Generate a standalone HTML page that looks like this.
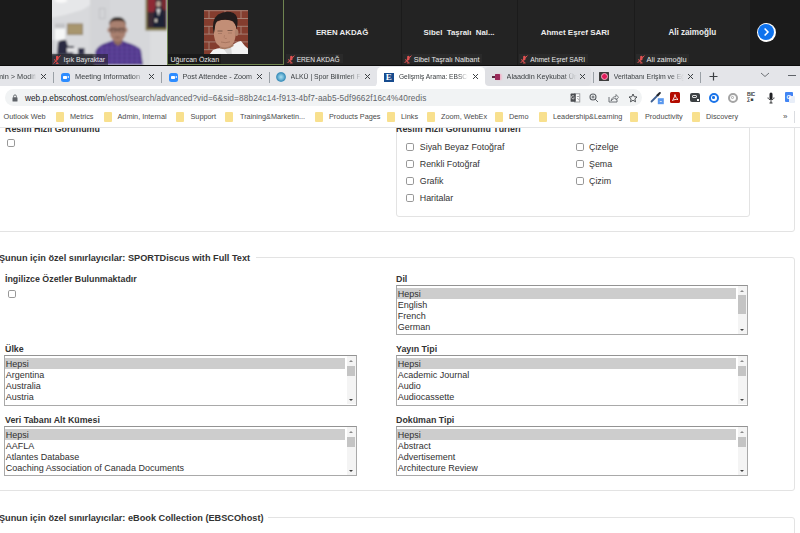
<!DOCTYPE html>
<html><head><meta charset="utf-8">
<style>
*{box-sizing:border-box}
html,body{margin:0;padding:0}
body{width:800px;height:533px;overflow:hidden;position:relative;background:#fff;font-family:"Liberation Sans",sans-serif}
.a{position:absolute}
#zs{left:0;top:0;width:800px;height:65.5px;background:#1b1b1b;overflow:hidden}
.tile{position:absolute;top:0;height:65px;background:#232323}
.big{position:absolute;color:#ececec;font-weight:bold;white-space:nowrap}
.lbl{position:absolute;bottom:2px;left:2px;height:9px;background:#1b1b1b;color:#e8e8e8;font-size:6.6px;line-height:9px;white-space:nowrap;padding:0 2px 0 10px}
.mic{position:absolute;left:2px;top:1px;width:6px;height:7px}
#tabs{left:0;top:65.5px;width:800px;height:20.5px;background:#e4e5e9;overflow:hidden}
.tab{position:absolute;top:0;height:21px;font-size:7.3px;color:#3c4043;white-space:nowrap}
.tt{position:absolute;top:6.5px;line-height:9px;overflow:hidden}
.tx{position:absolute;top:5px;font-size:10px;line-height:11px;color:#3c4043}
.sep{position:absolute;top:6px;width:1px;height:11px;background:#9aa0a6}
#tool{left:0;top:86px;width:800px;height:22px;background:#fff}
#omni{left:5px;top:2.5px;width:637px;height:17.5px;border-radius:9px;background:#f1f3f4}
#bm{left:0;top:108px;width:800px;height:20px;background:#fff;border-bottom:1px solid #e2e3e5;font-size:7.3px;color:#4a4a4a}
.bk{position:absolute;top:4px;line-height:9px;white-space:nowrap}
.fold{position:absolute;top:4px;width:8px;height:9.5px;background:#f8e08e;border-radius:1px;margin-left:-0.7px}
#page{left:0;top:128px;width:800px;height:405px;background:#fff;overflow:hidden;color:#333;font-size:8.8px}
.h{position:absolute;font-weight:bold;white-space:nowrap;color:#333}
.cb{position:absolute;width:8px;height:8px;border:1px solid #989898;border-radius:1.8px;background:#fff}
.ct{position:absolute;white-space:nowrap;color:#333;line-height:10px}
.sel{position:absolute;width:352px;height:50px;border:1px solid #a9a9a9;border-top-color:#939393;background:#fff;overflow:hidden}
.opt{position:absolute;left:0;height:11.2px;line-height:12.6px;padding-left:0.8px;white-space:nowrap;color:#303030;width:339px;font-size:9px}
.opt.s{background:#cdcdcd}
.sb{position:absolute;right:0;top:0;width:9px;height:48px;background:#f4f4f4}
.thumb{position:absolute;left:0.8px;width:7.4px;top:9.5px;height:10px;background:#c4c4c4}
.fs{position:absolute;border:1px solid #e3e3e3;border-radius:3px}

.zi{position:absolute;top:7px;width:9.5px;height:9px;border-radius:2.5px;background:#2d8cff}
.zi:after{content:"";position:absolute;left:2px;top:3px;width:4px;height:3px;background:#fff;border-radius:0.7px}
.zi:before{content:"";position:absolute;left:6px;top:3px;width:0;height:0;border-top:1.5px solid transparent;border-bottom:1.5px solid transparent;border-right:2px solid #fff}
.ai{position:absolute;top:6px;width:10px;height:10px;border-radius:50%;background:radial-gradient(circle,#a8dcef 0%,#6fb8d8 35%,#3f8fba 60%,#7cbad6 80%,#c9e1ec 100%)}
.ei{position:absolute;top:7px;width:9.5px;height:9.5px;background:#174b8e;color:#fff;font-family:"Liberation Serif",serif;font-weight:bold;font-size:9px;line-height:9.5px;text-align:center}
.ki{position:absolute;top:7px;width:9px;height:9px}
.ki:before{content:"";position:absolute;left:0;top:3.8px;width:3px;height:1.4px;background:#5a2a40}
.ki:after{content:"";position:absolute;left:2.5px;top:1.5px;width:5px;height:6px;background:#9a2a5a;box-shadow:1.5px 0 1.5px #f4b0c8;border-radius:0.5px}
.vi{position:absolute;top:6px;width:10px;height:9.5px;background:#3c3c3c;border-radius:0.5px}
.vi:after{content:"";position:absolute;left:1.5px;top:1.3px;width:7px;height:7px;box-sizing:border-box;border-radius:50%;background:#e01a5a;border:1px solid #f5b0c4}
.act{position:absolute;top:1.3px;height:19.5px;background:#fff;border-radius:4.5px 4.5px 0 0}
.hov{position:absolute;top:1.3px;height:19.2px;background:#dfe0e4;border-radius:4px}
.fade{-webkit-mask-image:linear-gradient(to right,#000 80%,transparent 100%)}
.fade2{-webkit-mask-image:linear-gradient(to right,#000 86%,transparent 100%)}
.fade4{-webkit-mask-image:linear-gradient(to right,#000 90%,transparent 100%)}
.fade3{-webkit-mask-image:linear-gradient(to right,#000 80%,transparent 100%)}

.url{font-size:8.25px;line-height:12px;color:#5f6368;white-space:nowrap}

.t{position:absolute;white-space:nowrap}
.lg{position:absolute;background:#fff}
.up,.dn{position:absolute;left:2.2px;width:0;height:0;border-left:2.3px solid transparent;border-right:2.3px solid transparent}
.up{top:3.5px;border-bottom:2.5px solid #8a8a8a}
.dn{bottom:3.5px;border-top:2.5px solid #404040}

.nm{position:absolute;color:#e6e6e6;font-size:6.8px;line-height:10px;white-space:nowrap}
</style></head><body>

<!-- ZOOM STRIP -->
<div id="zs" class="a">
  <svg class="a" style="left:52px;top:0" width="115" height="65" viewBox="0 0 115 65">
    <defs><filter id="bl" x="-10%" y="-10%" width="120%" height="120%"><feGaussianBlur stdDeviation="0.9"/></filter></defs>
    <g filter="url(#bl)">
    <rect x="-2" y="-2" width="119" height="69" fill="#d8d9dc"/>
    <path d="M-2 -2 H50 L30 10 Q15 15 -2 18Z" fill="#e6e7e9"/>
    <rect x="38" y="-2" width="20" height="69" fill="#d3d4d7"/>
    <rect x="58" y="-2" width="40" height="69" fill="#d6d7da"/>
    <rect x="98" y="-2" width="19" height="69" fill="#dcdddf"/>
    <ellipse cx="9" cy="0.5" rx="6.5" ry="2.2" fill="#fafafa"/>
    <rect x="3" y="23.5" width="10" height="5" fill="#c2c3c6"/>
    <rect x="3" y="28.5" width="10" height="11.5" fill="#f6f7f7"/>
    <rect x="15" y="23.5" width="16" height="11.5" fill="#8c7a5c"/>
    <rect x="16" y="24.5" width="14" height="9.5" fill="#a8966e"/>
    <rect x="47.5" y="8.5" width="5.5" height="10" fill="none" stroke="#bdbec2" stroke-width="0.9"/>
    <rect x="-2" y="40" width="4" height="14" fill="#c8c8cc"/>
    <path d="M5 54 L6 42 Q10 39 14 40 L16 46 L22 46 L21 54Z" fill="#2b2a42"/>
    <rect x="15" y="48" width="12" height="4.5" fill="#e2e2e4"/>
    <rect x="26" y="48" width="6.5" height="7" fill="#2e2e48"/>
    <rect x="-2" y="54" width="44" height="13" fill="#4e4f5e"/>
    <rect x="93.5" y="-2" width="21.5" height="32.5" fill="#7d7240"/>
    <rect x="95.5" y="-2" width="19.5" height="30" fill="#3a2a36"/>
    <rect x="95.5" y="-2" width="8" height="14" fill="#8e2c34"/>
    <rect x="110" y="-2" width="5" height="12" fill="#7a2a30"/>
    <path d="M101 28 L102 12 Q104 5 108 6 Q112 8 112 14 L113 28Z" fill="#1d2236"/>
    <ellipse cx="106.5" cy="4" rx="2.2" ry="3" fill="#c0a898"/>
    <path d="M104.5 9 L106.5 16 L108.5 9Z" fill="#dcdcdc"/>
    <rect x="103" y="19" width="2" height="3" fill="#d8d0c8"/>
    <path d="M42 65 L43.5 51 Q46 45 55 42.5 L62 40 L69 40 L75 42.5 Q85 45 89 50 L91 65Z" fill="#4f3488"/>
    <g stroke="#8c70c8" stroke-width="0.7" opacity="0.55"><path d="M46 48H88M45 52H89M44 56H90M44 60H90M44 64H90M50 44V65M55 43V65M60 41V65M65 41V65M70 41V65M75 43V65M80 44V65M85 47V65"/></g>
    <path d="M61 37 L71 37 L70 43 L66 46 L62 43Z" fill="#8e6a5c"/>
    <path d="M57.5 26 Q57 18 65.5 18 Q74 18 74 26 L73.5 35 Q71 41.5 65.5 41.5 Q60 41.5 58 35Z" fill="#a98070"/>
    <path d="M57.3 25 Q57.3 17 65.5 17 Q73.7 17 73.8 25 L72.5 21.5 Q66 19.5 59 21.5Z" fill="#2a201c"/>
    <path d="M58.3 29H64.2M66.8 29H72.8M64.2 29.4H66.8" stroke="#2a2020" stroke-width="0.7"/>
    <rect x="58.3" y="28.8" width="5.8" height="3" fill="none" stroke="#2e2626" stroke-width="0.5"/>
    <rect x="66.8" y="28.8" width="5.8" height="3" fill="none" stroke="#2e2626" stroke-width="0.5"/>
    <ellipse cx="65.5" cy="37.5" rx="3.2" ry="0.9" fill="#8e6858"/>
    <ellipse cx="56.8" cy="30" rx="1.3" ry="2.6" fill="#a88070"/>
    <ellipse cx="74.2" cy="30" rx="1.3" ry="2.6" fill="#a88070"/>
    </g>
  </svg>
  <div class="a" style="left:52px;top:53.5px;width:55.5px;height:11px;background:rgba(25,25,28,0.5)"></div>
  <svg class="a mic2" style="left:53px;top:55px" width="8" height="9" viewBox="0 0 8 9"><path d="M3 1.2 Q4.5 0.2 5.5 1.5 L5.5 4 Q5 6 3 5.5Z" fill="#e04848"/><path d="M1.5 4 Q2 7 4.2 7 L4.2 8.5M2.8 8.5H5.6" stroke="#e04848" stroke-width="0.9" fill="none"/><path d="M0.5 8.5 L7.5 0.5" stroke="#e04848" stroke-width="1"/></svg>
  <div class="nm" style="left:63.5px;top:55px">Işık Bayraktar</div>
  <div class="a" style="left:167px;top:0;width:117px;height:64.6px;border:1px solid #6f8450;border-top:none;background:#232323"></div>
  <svg class="a" style="left:203.7px;top:9.6px" width="44.5" height="44.5" viewBox="0 0 44.5 44.5">
    <defs><filter id="bl2" x="-5%" y="-5%" width="110%" height="110%"><feGaussianBlur stdDeviation="0.6"/></filter>
    <clipPath id="cp2"><rect width="44.5" height="44.5"/></clipPath></defs>
    <g clip-path="url(#cp2)"><g filter="url(#bl2)">
    <rect x="-2" y="-2" width="49" height="49" fill="#843c2e"/>
    <g stroke="#b29a8e" stroke-width="0.8" opacity="0.9">
      <path d="M-2 0.7H47M-2 8.5H47M-2 16.3H47M-2 24.1H47M-2 31.9H47M-2 39.7H47"/>
      <path d="M5 0.7V8.5M21 0.7V8.5M37 0.7V8.5M13 8.5V16.3M29 8.5V16.3M45 8.5V16.3M5 16.3V24.1M21 16.3V24.1M37 16.3V24.1M13 24.1V31.9M29 24.1V31.9M45 24.1V31.9M5 31.9V39.7M21 31.9V39.7M37 31.9V39.7M13 39.7V47M29 39.7V47"/>
    </g>
    <path d="M5 45 L9 40 Q14 37.5 19 38 L27 36 Q33 31.5 37 31 L41 36 L44.5 39 L44.5 45Z" fill="#f2f2f2"/>
    <path d="M19 38 L24 45 L28 45 L27 36Z" fill="#d8d8d8"/>
    <path d="M13.5 30 L29 30 L29.5 36 Q23 41 16 38.5Z" fill="#a87a64"/>
    <path d="M9.8 16 Q9 28 12.5 33.5 Q16 37.5 21 37.5 Q27 37 30 32 Q32.5 26 32 17 Q30 9 21 9.5 Q12 10 9.8 16Z" fill="#c28e76"/>
    <path d="M9.8 24 Q6.8 10 14 4.5 Q22 0 29.5 3 Q34.5 6 33.5 14 L32.5 19 Q31.5 12 27 10.5 Q20 9 13.5 11 Q11 13 10.8 19Z" fill="#241c1a"/>
    <ellipse cx="32.6" cy="22.5" rx="1.8" ry="3.6" fill="#b0826c"/>
    <path d="M13.5 21H18.5M23.5 20.5H28.5" stroke="#5a3e34" stroke-width="0.9" opacity="0.75"/>
    <path d="M14 23.5H18M24 23H28" stroke="#7a5446" stroke-width="0.6" opacity="0.6"/>
    <path d="M20.5 25 Q19.5 28 21 28.5 Q22.5 28.8 23 28" stroke="#9a6a56" stroke-width="0.6" fill="none" opacity="0.7"/>
    <path d="M17 32 Q21 33.5 26 31.8" stroke="#8a5a48" stroke-width="0.7" fill="none" opacity="0.7"/>
    </g></g>
  </svg>
  <div class="a" style="left:167.5px;top:54px;width:53px;height:10px;background:rgba(22,22,22,0.7)"></div>
  <div class="nm" style="left:170.5px;top:55px;font-size:7px">Uğurcan Özkan</div>
  <div class="tile" style="left:284.0px;width:116.5px"></div>
<div class="big" style="left:315.9px;top:27.90px;font-size:7.85px;line-height:10px">EREN AKDAĞ</div>
<div class="a" style="left:285.5px;top:54.2px;width:57.0px;height:9.3px;background:#2a2a2a"></div>
<svg class="a" style="left:286.8px;top:55px" width="8" height="8.5" viewBox="0 0 8 8.5"><path d="M3.2 1.3 Q4.6 0.3 5.6 1.6 L5.4 4.2 Q4.8 5.8 3 5.4Z" fill="#e25252"/><path d="M1.6 4 Q2 6.8 4.2 6.8 L4.2 8M2.8 8H5.6" stroke="#e25252" stroke-width="0.9" fill="none"/><path d="M0.6 8 L7.4 0.6" stroke="#e25252" stroke-width="1"/></svg>
<div class="nm" style="left:296.7px;top:55.0px;font-size:6.61px">EREN AKDAĞ</div>
<div class="tile" style="left:401.5px;width:115.0px"></div>
<div class="big" style="left:423.6px;top:27.90px;font-size:7.85px;line-height:10px">Sibel&nbsp; Taşralı&nbsp; Nal...</div>
<div class="a" style="left:403.0px;top:54.2px;width:79.0px;height:9.3px;background:#2a2a2a"></div>
<svg class="a" style="left:404.3px;top:55px" width="8" height="8.5" viewBox="0 0 8 8.5"><path d="M3.2 1.3 Q4.6 0.3 5.6 1.6 L5.4 4.2 Q4.8 5.8 3 5.4Z" fill="#e25252"/><path d="M1.6 4 Q2 6.8 4.2 6.8 L4.2 8M2.8 8H5.6" stroke="#e25252" stroke-width="0.9" fill="none"/><path d="M0.6 8 L7.4 0.6" stroke="#e25252" stroke-width="1"/></svg>
<div class="nm" style="left:413.7px;top:54.8px;font-size:7.21px">Sibel Taşralı Nalbant</div>
<div class="tile" style="left:517.5px;width:116.5px"></div>
<div class="big" style="left:540.7px;top:27.80px;font-size:8.02px;line-height:10px">Ahmet Eşref SARI</div>
<div class="a" style="left:519.0px;top:54.2px;width:69.0px;height:9.3px;background:#2a2a2a"></div>
<svg class="a" style="left:520.3px;top:55px" width="8" height="8.5" viewBox="0 0 8 8.5"><path d="M3.2 1.3 Q4.6 0.3 5.6 1.6 L5.4 4.2 Q4.8 5.8 3 5.4Z" fill="#e25252"/><path d="M1.6 4 Q2 6.8 4.2 6.8 L4.2 8M2.8 8H5.6" stroke="#e25252" stroke-width="0.9" fill="none"/><path d="M0.6 8 L7.4 0.6" stroke="#e25252" stroke-width="1"/></svg>
<div class="nm" style="left:530.2px;top:55.0px;font-size:6.78px">Ahmet Eşref SARI</div>
<div class="tile" style="left:634.6px;width:115.9px"></div>
<div class="big" style="left:668.4px;top:27.80px;font-size:8.15px;line-height:10px">Ali zaimoğlu</div>
<div class="a" style="left:636.1px;top:54.2px;width:53.0px;height:9.3px;background:#2a2a2a"></div>
<svg class="a" style="left:637.4px;top:55px" width="8" height="8.5" viewBox="0 0 8 8.5"><path d="M3.2 1.3 Q4.6 0.3 5.6 1.6 L5.4 4.2 Q4.8 5.8 3 5.4Z" fill="#e25252"/><path d="M1.6 4 Q2 6.8 4.2 6.8 L4.2 8M2.8 8H5.6" stroke="#e25252" stroke-width="0.9" fill="none"/><path d="M0.6 8 L7.4 0.6" stroke="#e25252" stroke-width="1"/></svg>
<div class="nm" style="left:646.6px;top:54.7px;font-size:7.42px">Ali zaimoğlu</div>
<div class="a" style="left:756.5px;top:22.5px;width:19px;height:19px;border-radius:50%;background:#fff"></div>
<div class="a" style="left:758px;top:24px;width:16px;height:16px;border-radius:50%;background:#0e72ed"></div>
<svg class="a" style="left:758px;top:24px" width="16" height="16" viewBox="0 0 16 16"><path d="M6.6 4.5 L10 8 L6.6 11.5" stroke="#fff" stroke-width="1.5" fill="none"/></svg>
<div class="a" style="left:0;top:64.6px;width:800px;height:1px;background:#0c0c0c"></div>
</div>

<!-- TAB STRIP -->
<div id="tabs" class="a">
  <div class="tab" style="left:0;width:53px"><div class="tt fade" style="left:0;width:36px;text-indent:-3px">min &gt; Modifi</div><svg class="a" style="left:40.3px;top:7.5px" width="7" height="7" viewBox="0 0 7 7"><path d="M1 1L6 6M6 1L1 6" stroke="#3c4043" stroke-width="1"/></svg></div>
  <div class="sep" style="left:53px"></div>
  <div class="zi" style="left:60.5px"></div>
  <div class="tab" style="left:75px;width:72px;font-size:7.36px"><div class="tt fade" style="left:0;width:71px">Meeting Information</div></div>
  <svg class="a" style="left:148.3px;top:7.5px" width="7" height="7" viewBox="0 0 7 7"><path d="M1 1L6 6M6 1L1 6" stroke="#3c4043" stroke-width="1"/></svg>
  <div class="sep" style="left:161px"></div>
  <div class="zi" style="left:168.5px"></div>
  <div class="tab" style="left:182.5px;width:74px;font-size:7.19px"><div class="tt fade4" style="left:0;width:74px">Post Attendee - Zoom</div></div>
  <svg class="a" style="left:256.3px;top:7.5px" width="7" height="7" viewBox="0 0 7 7"><path d="M1 1L6 6M6 1L1 6" stroke="#3c4043" stroke-width="1"/></svg>
  <div class="sep" style="left:269px"></div>
  <div class="ai" style="left:276px"></div>
  <div class="tab" style="left:290.6px;width:72px;font-size:6.87px"><div class="tt fade" style="left:0;width:71px">ALKÜ | Spor Bilimleri Fakültesi</div></div>
  <svg class="a" style="left:364.3px;top:7.5px" width="7" height="7" viewBox="0 0 7 7"><path d="M1 1L6 6M6 1L1 6" stroke="#3c4043" stroke-width="1"/></svg>
  <div class="a" style="left:371px;top:15px;width:120px;height:6px;background:#fff"></div><div class="a" style="left:370.5px;top:11px;width:6px;height:10px;background:#e4e5e9;border-bottom-right-radius:4.5px"></div><div class="act" style="left:376.5px;width:108px"></div>
  <div class="ei" style="left:384px">E</div>
  <div class="tab" style="left:398.9px;width:72px;font-size:6.65px"><div class="tt fade2" style="left:0;width:69px">Gelişmiş Arama: EBSCOhost</div></div>
  <svg class="a" style="left:472.3px;top:7.5px" width="7" height="7" viewBox="0 0 7 7"><path d="M1 1L6 6M6 1L1 6" stroke="#3c4043" stroke-width="1"/></svg>
  <div class="hov" style="left:484.5px;width:106px"></div>
  <div class="ki" style="left:492px"></div>
  <div class="tab" style="left:506.6px;width:72px;font-size:7.22px"><div class="tt fade3" style="left:0;width:70px">Alaaddin Keykubat Üniversitesi</div></div>
  <svg class="a" style="left:579.3px;top:7.5px" width="7" height="7" viewBox="0 0 7 7"><path d="M1 1L6 6M6 1L1 6" stroke="#3c4043" stroke-width="1"/></svg>
  <div class="sep" style="left:592.5px"></div>
  <div class="vi" style="left:599px"></div>
  <div class="tab" style="left:613.7px;width:72px;font-size:6.89px"><div class="tt fade" style="left:0;width:70px">Veritabanı Erişim ve Eğitim</div></div>
  <svg class="a" style="left:686.8px;top:7.5px" width="7" height="7" viewBox="0 0 7 7"><path d="M1 1L6 6M6 1L1 6" stroke="#3c4043" stroke-width="1"/></svg>
  <div class="sep" style="left:699.5px"></div>
  <svg class="a" style="left:709px;top:6.5px" width="9" height="9" viewBox="0 0 9 9"><path d="M4.5 0.5V8.5M0.5 4.5H8.5" stroke="#3c4043" stroke-width="1.2"/></svg>
  <svg class="a" style="left:760px;top:6px" width="10" height="6" viewBox="0 0 10 6"><path d="M1 1 L5 4.5 L9 1" stroke="#5f6368" stroke-width="0.9" fill="none"/></svg>
  <div class="a" style="left:788px;top:9.5px;width:8px;height:1px;background:#5f6368"></div>
</div>

<!-- TOOLBAR -->
<div id="tool" class="a">
  <div id="omni" class="a"></div>
  <svg class="a" style="left:12px;top:8px" width="6" height="8" viewBox="0 0 6 8"><rect x="0.5" y="3.3" width="5" height="4.2" rx="0.6" fill="#5f6368"/><path d="M1.6 3.5V2.3a1.4 1.4 0 0 1 2.8 0V3.5" stroke="#5f6368" stroke-width="0.9" fill="none"/></svg>
  <div class="a url" style="left:25px;top:7px"><span style="color:#202124">web.p.ebscohost.com</span>/ehost/search/advanced?<span style="letter-spacing:0.12px">vid=6&amp;sid=88b24c14-f913-4bf7-aab5-5df9662f16c4%40redis</span></div>
  <!-- omnibox icons -->
  <svg class="a" style="left:569.5px;top:7px" width="11" height="10" viewBox="0 0 11 10"><rect x="4.5" y="0.8" width="5.3" height="8.2" fill="#fff" stroke="#8a8c90" stroke-width="0.8"/><rect x="0.6" y="0.6" width="5.2" height="8.2" rx="0.6" fill="#4a4c50"/><path d="M4.2 3.2A1.6 1.6 0 1 0 4.4 5H3.2" stroke="#eee" stroke-width="0.7" fill="none"/><path d="M6.8 3.5H9M7.5 5C8 6.5 8.8 7 9.3 7.2" stroke="#6a6c70" stroke-width="0.6" fill="none"/></svg>
  <svg class="a" style="left:589px;top:7px" width="10" height="10" viewBox="0 0 10 10"><circle cx="4" cy="4" r="3" stroke="#5f6368" stroke-width="1.1" fill="none"/><path d="M6.2 6.2L9 9M2.5 4H5.5M4 2.5V5.5" stroke="#5f6368" stroke-width="1"/></svg>
  <svg class="a" style="left:608px;top:6.5px" width="11" height="10" viewBox="0 0 11 10"><path d="M1 4V9H9V6.5" stroke="#5f6368" stroke-width="0.9" fill="none"/><path d="M3 8C3.5 5 5.5 3.5 8 3.5V1.5L10.5 4.3L8 7V5.2C6 5.2 4.5 6.2 3 8Z" stroke="#5f6368" stroke-width="0.8" fill="none"/></svg>
  <svg class="a" style="left:627.5px;top:6.5px" width="10" height="10" viewBox="0 0 10 10"><path d="M5 1L6.2 3.7L9 4L6.9 5.9L7.5 8.8L5 7.3L2.5 8.8L3.1 5.9L1 4L3.8 3.7Z" stroke="#3c4043" stroke-width="0.9" fill="none" stroke-linejoin="round"/></svg>
  <!-- extensions -->
  <svg class="a" style="left:650px;top:5px" width="15" height="14" viewBox="0 0 15 14"><path d="M1.5 10.5L7 5" stroke="#3f5f90" stroke-width="1.8" stroke-linecap="round"/><path d="M6 4.2L9.2 1.2Q10.6 0.6 11 2L8.2 5.6Z" fill="#22262e"/><rect x="7.8" y="7.2" width="6" height="6" fill="#5a98ee"/><rect x="9.8" y="10" width="2" height="1" fill="#cfe0f8"/></svg>
  <div class="a" style="left:670px;top:6px;width:10px;height:11px;background:#b30b00;border-radius:1.5px"></div>
  <svg class="a" style="left:671px;top:7px" width="8" height="9" viewBox="0 0 8 9"><path d="M1.5 7.5C2.5 6 3.5 4 4 1.5C4.3 3.5 5.5 5.5 7 6.5C5 6.3 3 6.5 1.5 7.5Z" stroke="#fff" stroke-width="0.9" fill="none"/></svg>
  <div class="a" style="left:690px;top:7px;width:9.5px;height:9px;background:#3c4043;border-radius:2px"></div>
  <div class="a" style="left:692px;top:9px;width:5px;height:3px;border:1px solid #ddd;border-radius:1px"></div>
  <div class="a" style="left:696px;top:12px;width:4px;height:4px;background:#fff;border:1px solid #3c4043"></div>
  <div class="a" style="left:708.5px;top:6.5px;width:10px;height:10px;border-radius:50%;border:2.2px solid #1a73e8;background:#fff"></div>
  <div class="a" style="left:712.3px;top:10.3px;width:2.4px;height:2.4px;border-radius:50%;background:#1a73e8"></div>
  <div class="a" style="left:727.5px;top:6.5px;width:10px;height:10px;border-radius:50%;border:2.3px solid #a4a4a4;background:#fff"></div>
  <div class="a" style="left:731.2px;top:10.2px;width:2.6px;height:2.6px;border-radius:50%;border:0.8px solid #a4a4a4"></div>
  <div class="a" style="left:747px;top:6px;font-size:5px;line-height:5px;font-weight:bold;color:#3c4043;letter-spacing:-0.2px">BIC<br>&#8721;&#9632;</div>
  <svg class="a" style="left:767px;top:5.5px" width="8" height="12" viewBox="0 0 8 12"><rect x="2.5" y="0.5" width="3" height="7" rx="1.5" fill="#202124"/><path d="M1 5.5C1 8.5 7 8.5 7 5.5M4 8.5V11M2.5 11H5.5" stroke="#202124" stroke-width="0.9" fill="none"/></svg>
  <div class="a" style="left:785px;top:6px;width:8px;height:10px;background:#4285f4;border-radius:1px"></div>
  <div class="a" style="left:789px;top:10px;width:6px;height:7px;background:#e8eef8;border-radius:1px"></div>
  <div class="a" style="left:786.5px;top:8px;font-size:6px;line-height:6px;color:#fff;font-weight:bold">G</div>

</div>

<!-- BOOKMARKS -->
<div id="bm" class="a">
  <div class="bk" style="left:3.5px">Outlook Web</div>
  <div class="fold" style="left:57px"></div><div class="bk" style="left:70px">Metrics</div>
  <div class="fold" style="left:104.5px"></div><div class="bk" style="left:117.5px">Admin, Internal</div>
  <div class="fold" style="left:177px"></div><div class="bk" style="left:190.5px">Support</div>
  <div class="fold" style="left:226px"></div><div class="bk" style="left:240px">Training&amp;Marketin...</div>
  <div class="fold" style="left:316px"></div><div class="bk" style="left:329px">Products Pages</div>
  <div class="fold" style="left:388px"></div><div class="bk" style="left:401px">Links</div>
  <div class="fold" style="left:428px"></div><div class="bk" style="left:441px">Zoom, WebEx</div>
  <div class="fold" style="left:496px"></div><div class="bk" style="left:509px">Demo</div>
  <div class="fold" style="left:540px"></div><div class="bk" style="left:553px">Leadership&amp;Learning</div>
  <div class="fold" style="left:631px"></div><div class="bk" style="left:645px">Productivity</div>
  <div class="fold" style="left:693px"></div><div class="bk" style="left:706px">Discovery</div>
  <div class="bk" style="left:783px;font-size:8px">&#187;</div>
  <div class="a" style="left:794px;top:3px;width:1px;height:12px;background:#dadce0"></div>
</div>

<!-- PAGE -->
<div id="page" class="a">
<div class="fs" style="left:-10px;top:-28.0px;width:804.5px;height:131.5px"></div>
<div class="fs" style="left:396px;top:-28.0px;width:353.5px;height:117.0px"></div>
<div class="t" style="left:5.00px;top:-3.77px;font-size:8.86px;line-height:10px;font-weight:bold;color:#333">Resim Hızlı Görünümü</div>
<div class="cb" style="left:7px;top:10.7px"></div>
<div class="t" style="left:396.00px;top:-3.77px;font-size:8.86px;line-height:10px;font-weight:bold;color:#333">Resim Hızlı Görünümü Türleri</div>
<div class="cb" style="left:405.5px;top:14.8px"></div>
<div class="t" style="left:419.80px;top:13.83px;font-size:8.86px;line-height:10px;color:#333">Siyah Beyaz Fotoğraf</div>
<div class="cb" style="left:575.6px;top:14.8px"></div>
<div class="t" style="left:589.00px;top:13.83px;font-size:8.86px;line-height:10px;color:#333">Çizelge</div>
<div class="cb" style="left:405.5px;top:32.0px"></div>
<div class="t" style="left:419.80px;top:31.03px;font-size:8.86px;line-height:10px;color:#333">Renkli Fotoğraf</div>
<div class="cb" style="left:575.6px;top:32.0px"></div>
<div class="t" style="left:589.00px;top:31.03px;font-size:8.86px;line-height:10px;color:#333">Şema</div>
<div class="cb" style="left:405.5px;top:49.2px"></div>
<div class="t" style="left:419.80px;top:48.23px;font-size:8.86px;line-height:10px;color:#333">Grafik</div>
<div class="cb" style="left:575.6px;top:49.2px"></div>
<div class="t" style="left:589.00px;top:48.23px;font-size:8.86px;line-height:10px;color:#333">Çizim</div>
<div class="cb" style="left:405.5px;top:66.4px"></div>
<div class="t" style="left:419.80px;top:65.43px;font-size:8.86px;line-height:10px;color:#333">Haritalar</div>
<div class="fs" style="left:-10px;top:128.5px;width:804.5px;height:234.0px"></div>
<div class="lg" style="left:-2px;top:124.0px;width:258px;height:10px"></div>
<div class="t" style="left:-1.00px;top:125.12px;font-size:9.18px;line-height:10px;font-weight:bold;color:#333">Şunun için özel sınırlayıcılar: SPORTDiscus with Full Text</div>
<div class="t" style="left:5.00px;top:145.93px;font-size:8.86px;line-height:10px;font-weight:bold;color:#333">İngilizce Özetler Bulunmaktadır</div>
<div class="cb" style="left:7.5px;top:161.5px"></div>
<div class="t" style="left:396.00px;top:145.53px;font-size:8.86px;line-height:10px;font-weight:bold;color:#333">Dil</div>
<div class="sel" style="left:396.0px;top:157.1px;width:351.5px;height:50.4px"><div class="opt s" style="top:1.60px;width:338.5px">Hepsi</div><div class="opt" style="top:12.77px;width:338.5px">English</div><div class="opt" style="top:23.94px;width:338.5px">French</div><div class="opt" style="top:35.11px;width:338.5px">German</div><div class="opt" style="top:46.28px;width:338.5px">Italian</div><div class="sb"><div class="up"></div><div class="thumb" style="top:9.3px;height:18.2px"></div><div class="dn"></div></div></div>
<div class="t" style="left:5.00px;top:215.73px;font-size:8.86px;line-height:10px;font-weight:bold;color:#333">Ülke</div>
<div class="sel" style="left:4.0px;top:227.3px;width:352.6px;height:50.4px"><div class="opt s" style="top:1.60px;width:339.6px">Hepsi</div><div class="opt" style="top:12.77px;width:339.6px">Argentina</div><div class="opt" style="top:23.94px;width:339.6px">Australia</div><div class="opt" style="top:35.11px;width:339.6px">Austria</div><div class="opt" style="top:46.28px;width:339.6px">Belgium</div><div class="sb"><div class="up"></div><div class="thumb" style="top:9.8px;height:10.0px"></div><div class="dn"></div></div></div>
<div class="t" style="left:396.00px;top:215.73px;font-size:8.86px;line-height:10px;font-weight:bold;color:#333">Yayın Tipi</div>
<div class="sel" style="left:396.0px;top:227.3px;width:351.5px;height:50.4px"><div class="opt s" style="top:1.60px;width:338.5px">Hepsi</div><div class="opt" style="top:12.77px;width:338.5px">Academic Journal</div><div class="opt" style="top:23.94px;width:338.5px">Audio</div><div class="opt" style="top:35.11px;width:338.5px">Audiocassette</div><div class="opt" style="top:46.28px;width:338.5px">Biography</div><div class="sb"><div class="up"></div><div class="thumb" style="top:9.8px;height:10.0px"></div><div class="dn"></div></div></div>
<div class="t" style="left:5.00px;top:286.53px;font-size:8.86px;line-height:10px;font-weight:bold;color:#333">Veri Tabanı Alt Kümesi</div>
<div class="sel" style="left:4.0px;top:298.0px;width:352.6px;height:50.4px"><div class="opt s" style="top:1.60px;width:339.6px">Hepsi</div><div class="opt" style="top:12.77px;width:339.6px">AAFLA</div><div class="opt" style="top:23.94px;width:339.6px">Atlantes Database</div><div class="opt" style="top:35.11px;width:339.6px">Coaching Association of Canada Documents</div><div class="opt" style="top:46.28px;width:339.6px">Commonwealth Games Documents</div><div class="sb"><div class="up"></div><div class="thumb" style="top:9.8px;height:10.0px"></div><div class="dn"></div></div></div>
<div class="t" style="left:396.00px;top:286.53px;font-size:8.86px;line-height:10px;font-weight:bold;color:#333">Doküman Tipi</div>
<div class="sel" style="left:396.0px;top:298.0px;width:351.5px;height:50.4px"><div class="opt s" style="top:1.60px;width:338.5px">Hepsi</div><div class="opt" style="top:12.77px;width:338.5px">Abstract</div><div class="opt" style="top:23.94px;width:338.5px">Advertisement</div><div class="opt" style="top:35.11px;width:338.5px">Architecture Review</div><div class="opt" style="top:46.28px;width:338.5px">Article</div><div class="sb"><div class="up"></div><div class="thumb" style="top:9.8px;height:10.0px"></div><div class="dn"></div></div></div>
<div class="fs" style="left:-10px;top:388.5px;width:804.5px;height:100.0px"></div>
<div class="lg" style="left:-2px;top:384.0px;width:270px;height:10px"></div>
<div class="t" style="left:-1.00px;top:384.92px;font-size:9.18px;line-height:10px;font-weight:bold;color:#333">Şunun için özel sınırlayıcılar: eBook Collection (EBSCOhost)</div>
</div><!--/page-->

</body></html>
